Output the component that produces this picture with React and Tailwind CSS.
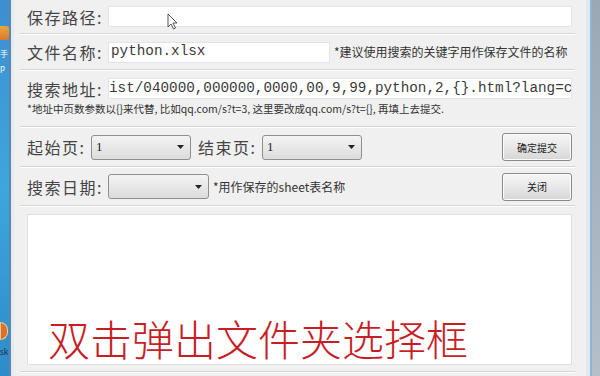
import React from "react";

const cjk = { fontFamily: '"Noto Sans CJK SC", "Noto Sans", sans-serif' };
const mono = { fontFamily: '"Liberation Mono", "DejaVu Sans Mono", monospace' };

function Sep() {
  return <div className="h-[2px] border-t border-[#d5d5d5] border-b border-b-white" />;
}

function Label({ children, className = "" }) {
  return (
    <span className={"shrink-0 text-[16px] tracking-[1.5px] text-[#444] leading-none whitespace-nowrap " + className} style={cjk}>
      {children}
    </span>
  );
}

function Select({ value, className = "" }) {
  return (
    <div
      className={
        "shrink-0 h-[25px] flex items-center justify-between rounded-[3px] border border-[#8e8f8f] bg-gradient-to-b from-[#f4f4f4] to-[#dcdcdc] pl-[4px] pr-[6px] " +
        className
      }
    >
      <span className="text-[13px] text-[#222]" style={{ fontFamily: '"Liberation Serif", serif' }}>
        {value}
      </span>
      <svg width="7" height="4" viewBox="0 0 7 4">
        <path d="M0 0h7L3.5 4z" fill="#222" />
      </svg>
    </div>
  );
}

function Button({ children }) {
  return (
    <div
      className="shrink-0 w-[70px] h-[28px] flex items-center justify-center rounded-[3px] border border-[#8a8a8a] bg-gradient-to-b from-[#f6f6f6] via-[#e8e8e8] to-[#d6d6d6] shadow-[inset_0_0_0_1px_#fcfcfc] text-[10px] text-[#222]"
      style={cjk}
    >
      {children}
    </div>
  );
}

function Input({ children, className = "" }) {
  return (
    <div
      className={
        "min-w-0 h-[21px] bg-white border border-[#e2e3ea] flex items-center overflow-hidden whitespace-nowrap text-[14.3px] text-[#3a3a3a] " +
        className
      }
      style={mono}
    >
      {children}
    </div>
  );
}

export default function App() {
  return (
    <div className="w-[600px] h-[376px] flex overflow-hidden bg-[#f0f0f0] relative">
      {/* desktop strip */}
      <div className="shrink-0 w-[9px] h-full bg-gradient-to-b from-[#3d8fcf] via-[#3ea6dd] to-[#2d8cc9] flex flex-col overflow-hidden">
        <div className="mt-[26px] w-[9px] h-[14px] bg-gradient-to-b from-[#e9a640] to-[#d9782a] rounded-r-[3px]" />
        <div className="mt-[10px] text-[8px] leading-none text-white" style={cjk}>手</div>
        <div className="mt-[6px] text-[8px] leading-none text-white" style={cjk}>p</div>
        <div className="mt-[250px] w-[8px] h-[18px] rounded-r-full bg-[#d9702c] border border-[#f6c79a]" />
        <div className="mt-[8px] text-[8px] leading-none text-[#1a2a3a]" style={cjk}>sk</div>
      </div>
      <div className="shrink-0 w-[2px] h-full bg-[#5b86ad]" />
      <div className="shrink-0 w-[3px] h-full bg-[#e6ebf0]" />

      {/* client */}
      <div className="flex-1 min-w-0 h-full flex flex-col pl-[6px] pr-[11px]">
        {/* row 1 */}
        <div className="h-[33px] flex items-center pl-[7px] pr-[3px]">
          <Label className="w-[81px]">保存路径:</Label>
          <Input className="flex-1" />
        </div>
        <Sep />
        {/* row 2 */}
        <div className="h-[34px] flex items-center pl-[7px] pr-[3px]">
          <Label className="w-[81px]">文件名称:</Label>
          <Input className="shrink-0 w-[222px] pl-[2px]">python.xlsx</Input>
          <span className="ml-[4px] text-[12px] text-[#333] whitespace-nowrap" style={cjk}>
            *建议使用搜索的关键字用作保存文件的名称
          </span>
        </div>
        <Sep />
        {/* row 3 */}
        <div className="h-[55px] flex flex-col pl-[7px] pr-[3px] pt-[7px]">
          <div className="flex items-center min-w-0">
            <Label className="w-[81px]">搜索地址:</Label>
            <Input className="flex-1">ist/040000,000000,0000,00,9,99,python,2,{"{}"}.html?lang=cd</Input>
          </div>
          <div className="mt-[5px] text-[10.5px] leading-none text-[#333] whitespace-nowrap" style={cjk}>
            *地址中页数参数以{"{}"}来代替, 比如qq.com/s?t=3, 这里要改成qq.com/s?t={"{}"}, 再填上去提交.
          </div>
        </div>
        <Sep />
        {/* row 4 */}
        <div className="h-[38px] flex items-center pl-[7px] pr-[3px]">
          <Label className="w-[64px]">起始页:</Label>
          <Select value="1" className="w-[100px]" />
          <Label className="ml-[7px] w-[64px]">结束页:</Label>
          <Select value="1" className="w-[100px]" />
          <div className="flex-1" />
          <Button>确定提交</Button>
        </div>
        <Sep />
        {/* row 5 */}
        <div className="h-[37px] flex items-center pl-[7px] pr-[3px]">
          <Label className="w-[81px]">搜索日期:</Label>
          <Select value="" className="w-[101px]" />
          <span className="ml-[4px] text-[12px] text-[#333] whitespace-nowrap" style={cjk}>
            *用作保存的sheet表名称
          </span>
          <div className="flex-1" />
          <Button>关闭</Button>
        </div>
        <Sep />
        {/* text area */}
        <div className="mt-[7px] ml-[7px] mr-[3px] h-[151px] bg-white border border-[#e0e0e0] flex flex-col justify-end pl-[20px] pb-[2px]">
          <div className="text-[42px] leading-[48px] text-[#c81d25] whitespace-nowrap font-light" style={cjk}>
            双击弹出文件夹选择框
          </div>
        </div>
        <div className="mt-[6px] h-[2px] border-t border-[#d5d5d5] border-b border-b-white" />
      </div>

      {/* right frame */}
      <div className="shrink-0 w-[4px] h-full bg-[#e4e8ee]" />
      <div className="shrink-0 w-[2px] h-full bg-[#8fb4d8]" />
      <div className="shrink-0 w-[8px] h-full bg-gradient-to-b from-[#9aa8b6] to-[#b4bfca]" />

      {/* mouse cursor */}
      <svg className="absolute left-[167px] top-[13px]" width="11" height="17" viewBox="0 0 11 17">
        <path d="M1 1v13l3-3 2.5 5 2-1-2.5-5H10z" fill="#fff" stroke="#555" strokeWidth="1" strokeLinejoin="round" />
      </svg>
    </div>
  );
}
